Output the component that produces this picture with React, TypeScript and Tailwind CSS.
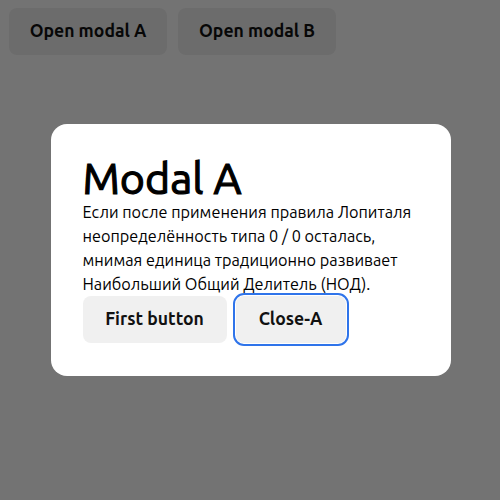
import React from "react";

export default function App() {
  const font = { fontFamily: "Ubuntu, 'Noto Sans', sans-serif" };
  return (
    <div className="relative w-[500px] h-[500px] bg-white overflow-hidden" style={font}>
      <div className="flex gap-[11px] p-[8px] pl-[9px]">
        <button className="h-[47px] w-[158px] rounded-[8px] bg-[#efefef] text-[17.6px] font-bold text-[#111]">
          Open modal A
        </button>
        <button className="h-[47px] w-[158px] rounded-[8px] bg-[#efefef] text-[17.6px] font-bold text-[#111]">
          Open modal B
        </button>
      </div>
      <div className="absolute inset-0 bg-black/55 flex items-center justify-center">
        <div className="w-[400px] ml-[1px] rounded-[16px] bg-white px-[32px] pt-[32px] pb-[33px] text-black">
          <h1 className="text-[43px] leading-[44px] font-normal [-webkit-text-stroke:1.2px_black]">Modal A</h1>
          <p className="text-[16.25px] leading-[24px]">
            Если после применения правила Лопиталя неопределённость типа 0 / 0 осталась, мнимая единица традиционно развивает Наибольший Общий Делитель (НОД).
          </p>
          <div className="flex gap-[9px]">
            <button className="h-[47px] w-[144px] rounded-[8px] bg-[#f0f0f0] text-[17.6px] font-bold text-[#111]">
              First button
            </button>
            <button className="h-[47px] w-[110px] rounded-[8px] bg-[#f0f0f0] text-[17.6px] font-bold text-[#111] outline-2 outline-offset-1 outline-[#2f74ea]">
              Close-A
            </button>
          </div>
        </div>
      </div>
    </div>
  );
}
